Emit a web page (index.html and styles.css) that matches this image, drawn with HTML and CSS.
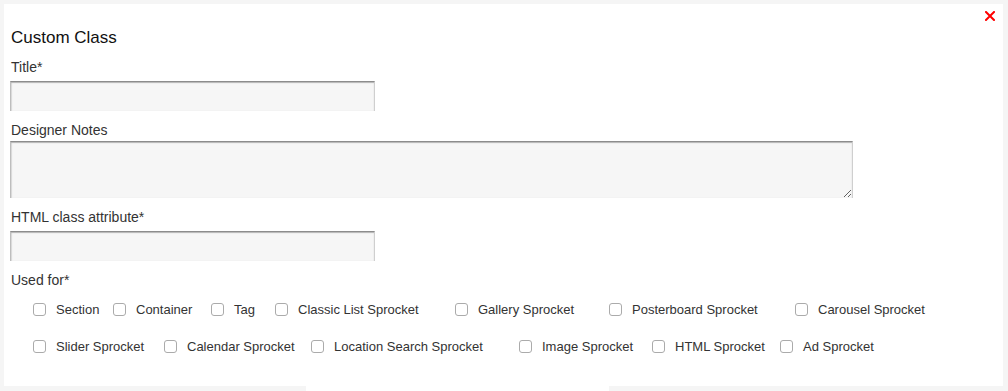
FILE: index.html
```html
<!DOCTYPE html>
<html>
<head>
<meta charset="utf-8">
<link rel="stylesheet" href="styles.css">
</head>
<body>
<div class="wrap">
  <div class="panel">
    <button class="close" type="button" aria-label="Close">
      <svg width="10" height="10" viewBox="0 0 10 10"><path d="M1 1 L9 9 M9 1 L1 9" stroke="#f00" stroke-width="2" stroke-linecap="square" fill="none"/></svg>
    </button>
    <h2 class="heading">Custom Class</h2>
    <label class="field-label">Title*</label>
    <input class="text-input" type="text">
    <label class="field-label">Designer Notes</label>
    <textarea class="notes"></textarea>
    <label class="field-label">HTML class attribute*</label>
    <input class="text-input" type="text">
    <label class="field-label">Used for*</label>
    <div class="check-row row1">
      <label class="check"><input type="checkbox"><span>Section</span></label>
      <label class="check"><input type="checkbox"><span>Container</span></label>
      <label class="check"><input type="checkbox"><span>Tag</span></label>
      <label class="check"><input type="checkbox"><span>Classic List Sprocket</span></label>
      <label class="check"><input type="checkbox"><span>Gallery Sprocket</span></label>
      <label class="check"><input type="checkbox"><span>Posterboard Sprocket</span></label>
      <label class="check"><input type="checkbox"><span>Carousel Sprocket</span></label>
    </div>
    <div class="check-row row2">
      <label class="check"><input type="checkbox"><span>Slider Sprocket</span></label>
      <label class="check"><input type="checkbox"><span>Calendar Sprocket</span></label>
      <label class="check"><input type="checkbox"><span>Location Search Sprocket</span></label>
      <label class="check"><input type="checkbox"><span>Image Sprocket</span></label>
      <label class="check"><input type="checkbox"><span>HTML Sprocket</span></label>
      <label class="check"><input type="checkbox"><span>Ad Sprocket</span></label>
    </div>
  </div>
  <div class="tab-strip"></div>
</div>
</body>
</html>
```
FILE: styles.css
```css
html, body {
  margin: 0;
  padding: 0;
  background: #f5f5f5;
  font-family: "Liberation Sans", Arial, Helvetica, sans-serif;
  color: #222;
}
.wrap {
  padding: 4px 5px 0 4px;
}
.panel {
  position: relative;
  background: #fff;
  height: 382px;
  box-sizing: border-box;
  padding: 24px 6px 0 6px;
}
.close {
  position: absolute;
  top: 7px;
  right: 8px;
  width: 10px;
  height: 10px;
  padding: 0;
  border: 0;
  background: none;
  display: block;
}
.close svg { display: block; }
.heading {
  margin: 0;
  font-size: 17px;
  line-height: 20px;
  font-weight: normal;
  color: #111;
  padding-left: 1px;
}
.field-label {
  display: block;
  font-size: 14px;
  line-height: 18px;
  color: #333;
  padding-left: 1px;
  margin-top: 10px;
}
.heading + .field-label {
  margin-top: 10px;
}
.text-input, .notes {
  display: block;
  box-sizing: border-box;
  margin: 5px 0 0 0;
  background: #f6f6f6;
  border: 1px solid #cfcfcf;
  border-top: 1px solid #8c8c8c;
  border-bottom: 0;
  border-left-color: #bdbdbd;
  box-shadow: inset 0 1px 1px #b5b5b5, inset 1px 0 1px #dcdcdc;
  border-radius: 0;
  font-family: inherit;
  outline: none;
}
.text-input {
  width: 365px;
  height: 30px;
}
.notes {
  width: 843px;
  height: 57px;
  resize: vertical;
  border-bottom: 0;
  margin-top: 2px;
}
.check-row {
  display: flex;
  align-items: center;
  padding-left: 23px;
  height: 37px;
  font-size: 13px;
  color: #333;
}
.row1 { margin-top: 2px; }
.check {
  display: flex;
  align-items: center;
  white-space: nowrap;
}
.check input {
  -webkit-appearance: none;
  appearance: none;
  margin: 0 10px 0 0;
  width: 13px;
  height: 13px;
  box-sizing: border-box;
  border: 1px solid #ababab;
  border-radius: 3px;
  background: #fff;
  flex: none;
}
.row1 .check:nth-child(1) { width: 80px; }
.row1 .check:nth-child(2) { width: 98px; }
.row1 .check:nth-child(3) { width: 64px; }
.row1 .check:nth-child(4) { width: 180px; }
.row1 .check:nth-child(5) { width: 154px; }
.row1 .check:nth-child(6) { width: 186px; }
.row2 .check:nth-child(1) { width: 131px; }
.row2 .check:nth-child(2) { width: 147px; }
.row2 .check:nth-child(3) { width: 208px; }
.row2 .check:nth-child(4) { width: 133px; }
.row2 .check:nth-child(5) { width: 128px; }
.tab-strip {
  margin-left: 302px;
  width: 303px;
  height: 6px;
  background: #fff;
}
```
